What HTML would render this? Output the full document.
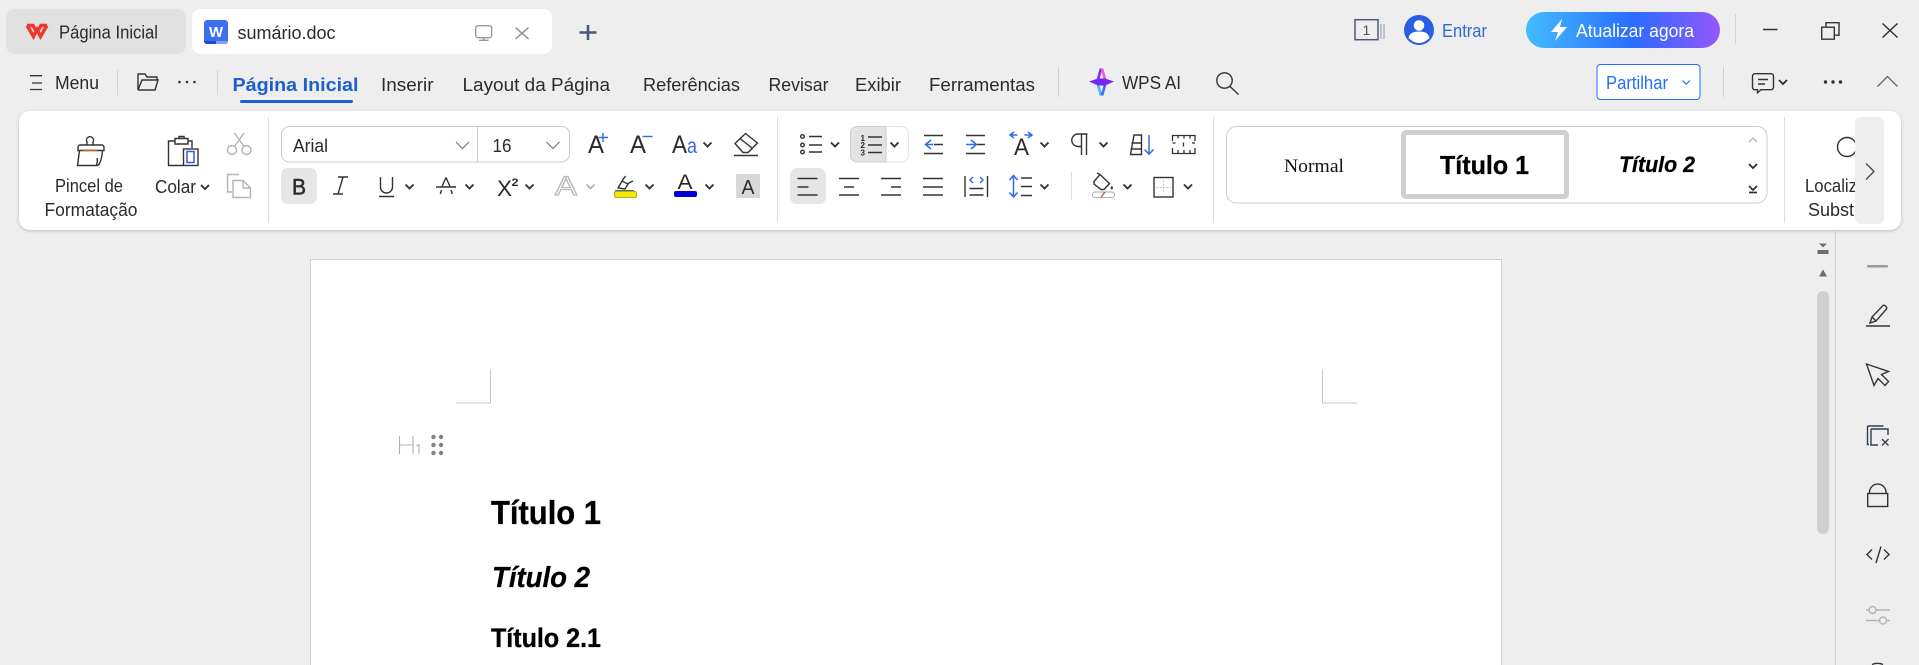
<!DOCTYPE html>
<html lang="pt"><head><meta charset="utf-8"><title>sumário.doc</title>
<style>
html,body{margin:0;padding:0;width:1919px;height:665px;overflow:hidden;background:#eeeeee}
svg{display:block;position:absolute;left:0;top:0}
text{font-family:"Liberation Sans",sans-serif;fill:#2b2b2b}
.i{fill:none;stroke:#333;stroke-width:1.4}
.g{fill:none;stroke:#b4b4b4;stroke-width:1.4}
.b{fill:none;stroke:#2f6bea;stroke-width:1.5}
</style></head><body>
<svg width="1919" height="665" viewBox="0 0 1919 665" xmlns="http://www.w3.org/2000/svg">
<defs>
<path id="c" d="M0 0l4 4 4-4" fill="none" stroke="#333" stroke-width="1.9"/>
<path id="t" d="M0 0l6.500 6.500 6.500-6.500" fill="none" stroke="#777" stroke-width="1.200"/>
<linearGradient id="bt" x1="0" x2="1" y1="0" y2="0"><stop offset="0" stop-color="#43bcff"/><stop offset=".55" stop-color="#2a6cff"/><stop offset="1" stop-color="#9557fb"/></linearGradient>
<filter id="sh" x="-2%" y="-10%" width="104%" height="125%"><feDropShadow dx="0" dy="1" stdDeviation="1.600" flood-color="#000" flood-opacity=".22"/></filter>
</defs>

<!-- tabs -->
<rect x="6" y="9" width="180" height="45" rx="9" fill="#e1e1e1"/>
<rect x="192" y="9" width="360" height="45" rx="9" fill="#fff"/>
<path d="M27 25.500L33.500 36.500L37 29.500L40.500 36.500L47 25.500M27 25.500h6L37 33M47 25.500h-6L37 33" fill="none" stroke="#f0352b" stroke-width="3.400" stroke-linejoin="miter"/>
<text x="59" y="38.500" font-size="18" textLength="99" lengthAdjust="spacingAndGlyphs">Página Inicial</text>
<rect x="204" y="20" width="24" height="24" rx="3" fill="#3f6ff0"/>
<path d="M204 41h12v3h-9a3 3 0 0 1-3-3z" fill="#1c4ccf"/><path d="M216 41h12a3 3 0 0 1-3 3h-9z" fill="#7d9ff5"/>
<text x="209" y="37" font-size="15" font-weight="700" style="fill:#fff" textLength="14" lengthAdjust="spacingAndGlyphs">W</text>
<text x="237.500" y="39" font-size="18" textLength="98" lengthAdjust="spacingAndGlyphs">sumário.doc</text>
<g fill="none" stroke="#9a9a9a" stroke-width="1.400"><rect x="475.700" y="25.700" width="16" height="12" rx="2.500"/><path d="M483.700 37.700v2.500M479 40.300h9.500"/></g>
<path d="M515.500 27.500l13 11.500M528.500 27.500l-13 11.500" fill="none" stroke="#8c8c8c" stroke-width="1.400"/>
<path d="M588 25v15M579.500 32.500h17" fill="none" stroke="#4a5878" stroke-width="2.600"/>

<!-- top right -->
<rect x="1355" y="19.700" width="23" height="20" fill="none" stroke="#4f5b75" stroke-width="1.500"/>
<text x="1362.500" y="35" font-size="14" style="fill:#555">1</text>
<path d="M1381 24v15M1384 24v15" stroke="#9aa1b0" stroke-width="1.200"/>
<circle cx="1419" cy="30" r="15" fill="#2a5de3"/>
<circle cx="1419" cy="25.500" r="5.300" fill="#fff"/><path d="M1408.500 38c1-5 5-6.500 10.500-6.500s9.500 1.500 10.500 6.500c-3 3-6.500 5-10.500 5s-7.500-2-10.500-5z" fill="#fff"/>
<text x="1442" y="37" font-size="18" style="fill:#3168d8" textLength="45" lengthAdjust="spacingAndGlyphs">Entrar</text>
<rect x="1526" y="12" width="194" height="36" rx="18" fill="url(#bt)"/>
<path d="M1562 19l-11 13h7l-3 9 12-14h-7z" fill="#fff"/>
<text x="1576" y="37" font-size="18" style="fill:#fff" textLength="118" lengthAdjust="spacingAndGlyphs">Atualizar agora</text>
<path d="M1735.500 14v30" stroke="#d2d2d2"/>
<path d="M1763 29.500h14.500" stroke="#333" stroke-width="1.500"/>
<path d="M1826 27v-4.300h13v12.500h-4M1821.700 27.200h12.600v12h-12.600z" fill="none" stroke="#333" stroke-width="1.400"/>
<path d="M1882.500 23.500l15 14M1897.500 23.500l-15 14" stroke="#333" stroke-width="1.500"/>

<!-- menu row -->
<path d="M30 75.700h12M32 83h10M30 89.500h12" stroke="#333" stroke-width="1.300"/>
<text x="55" y="89" font-size="18" textLength="44" lengthAdjust="spacingAndGlyphs">Menu</text>
<path d="M117.500 70v25M217.500 70v25" stroke="#d4d4d4"/>
<path d="M138 90V74h7l2 3h10v3M138 90h17l3-10h-16l-4 10" class="i"/>
<g fill="#333"><circle cx="179.500" cy="82" r="1.300"/><circle cx="187" cy="82" r="1.300"/><circle cx="194.500" cy="82" r="1.300"/></g>
<text x="232.500" y="91" font-size="18.500" font-weight="700" style="fill:#1d5fcf" textLength="126" lengthAdjust="spacingAndGlyphs">Página Inicial</text>
<rect x="240" y="100" width="113" height="3" rx="1.500" fill="#1d5fcf"/>
<text x="381" y="91" font-size="18" textLength="52.500" lengthAdjust="spacingAndGlyphs">Inserir</text>
<text x="462.500" y="91" font-size="18" textLength="147.500" lengthAdjust="spacingAndGlyphs">Layout da Página</text>
<text x="643" y="91" font-size="18" textLength="97" lengthAdjust="spacingAndGlyphs">Referências</text>
<text x="768.500" y="91" font-size="18" textLength="60" lengthAdjust="spacingAndGlyphs">Revisar</text>
<text x="855" y="91" font-size="18" textLength="46" lengthAdjust="spacingAndGlyphs">Exibir</text>
<text x="929" y="91" font-size="18" textLength="106" lengthAdjust="spacingAndGlyphs">Ferramentas</text>
<path d="M1058.500 67v30" stroke="#cfcfcf"/>
<path d="M1098 79.500L1101 68.500" stroke="#7a2cff" stroke-width="2.600" fill="none"/>
<path d="M1102 68.500L1105 79.500" stroke="#e55bd8" stroke-width="2.600" fill="none"/>
<path d="M1098 85L1101 95.500" stroke="#47b6ff" stroke-width="2.600" fill="none"/>
<path d="M1102 95.500L1105 85" stroke="#3a6cff" stroke-width="2.600" fill="none"/>
<path d="M1089 81.500L1098 78.500H1105L1114 81.500L1105 85.500H1098Z" fill="#7424f4"/>
<text x="1122" y="89" font-size="18" textLength="59" lengthAdjust="spacingAndGlyphs">WPS AI</text>
<circle cx="1224.500" cy="80.500" r="7.700" class="i"/><path d="M1230 86.500l8.500 8" class="i"/>
<rect x="1597" y="64.500" width="103" height="35" rx="3.500" fill="#fff" stroke="#1f6fff"/>
<text x="1606" y="89" font-size="18" style="fill:#1f6fff" textLength="62" lengthAdjust="spacingAndGlyphs">Partilhar</text>
<path d="M1682.500 80.500l3.700 3.700 3.700-3.700" fill="none" stroke="#1f6fff" stroke-width="1.200"/>
<path d="M1723.500 67v30" stroke="#cfcfcf"/>
<path d="M1755 73.700h16a2.500 2.500 0 0 1 2.500 2.500v11a2.500 2.500 0 0 1-2.500 2.500h-10l-3.500 3v-3h-2.500a2.500 2.500 0 0 1-2.500-2.500v-11a2.500 2.500 0 0 1 2.500-2.500zM1758 79.500h10M1758 84h7" class="i"/>
<use href="#c" x="1779" y="80"/>
<g fill="#333"><circle cx="1825.500" cy="82" r="1.700"/><circle cx="1833" cy="82" r="1.700"/><circle cx="1840.500" cy="82" r="1.700"/></g>
<path d="M1877.500 86.500l10-10 10 10" fill="none" stroke="#666" stroke-width="1.300"/>

<!-- ribbon -->
<rect x="19" y="111" width="1882" height="119" rx="11" fill="#fff" filter="url(#sh)"/>
<path d="M268.500 117v106M777.500 117v106M1213.500 117v106M1784.500 117v106" stroke="#dcdcdc"/>

<!-- clipboard -->
<path d="M87 145v-3a3.500 3.500 0 1 1 6 0v3M80 145h22c1 0 2 1 2 2.500v3H78v-3c0-1.500 1-2.500 2-2.500zM79.500 150.500L77.500 165.500h19.500c3 0 5-8 5.500-15M96.500 165c1-3 1-5 .5-7" class="i"/>
<path d="M83 150.300h14" stroke="#d2561e" stroke-width="1.500"/>
<text x="55" y="192" font-size="18" textLength="68" lengthAdjust="spacingAndGlyphs">Pincel de</text>
<text x="44.500" y="216" font-size="18" textLength="93" lengthAdjust="spacingAndGlyphs">Formatação</text>
<path d="M175 141h-6.500v24.500h14.500M188 141h4v7M175 138.500h13v5.500h-13zM179 138.500v-2h5v2" class="i"/>
<rect x="183.500" y="149" width="14.500" height="16.500" class="i"/>
<rect x="187" y="151.500" width="7" height="11" fill="none" stroke="#2f5fe0" stroke-width="1.500"/>
<text x="155" y="193" font-size="18" textLength="41" lengthAdjust="spacingAndGlyphs">Colar</text>
<use href="#c" x="201" y="185"/>
<g class="g"><circle cx="232" cy="150" r="4.500"/><circle cx="246.500" cy="150" r="4.500"/><path d="M234.500 146.500l9.500-13.500M244 146.500l-9.500-13.500"/>
<path d="M232 192h-4.500v-17.500h11.500M233 180.500h10l7.500 7.500v9.500H233zM243 180.500v7.500h7.500"/></g>

<!-- font -->
<rect x="281.500" y="126.500" width="288" height="35.500" rx="8" fill="#fff" stroke="#ccc"/>
<path d="M477.500 126.500v35.500" stroke="#ccc"/>
<text x="293" y="152" font-size="18" textLength="35" lengthAdjust="spacingAndGlyphs">Arial</text>
<use href="#t" x="456" y="142"/>
<text x="492.500" y="152" font-size="18" textLength="19" lengthAdjust="spacingAndGlyphs">16</text>
<use href="#t" x="546.500" y="142"/>
<text x="588" y="153" font-size="25" textLength="16" lengthAdjust="spacingAndGlyphs">A</text>
<path d="M603 133v9M598.500 137.500h9.500" stroke="#2f6bea" stroke-width="1.400"/>
<text x="630" y="153" font-size="25" textLength="16" lengthAdjust="spacingAndGlyphs">A</text>
<path d="M642.500 136.500h10" stroke="#2f6bea" stroke-width="1.400"/>
<text x="672" y="153" font-size="25" textLength="15" lengthAdjust="spacingAndGlyphs">A</text>
<text x="687" y="153" font-size="21" style="fill:#2f6bea" textLength="10" lengthAdjust="spacingAndGlyphs">a</text>
<use href="#c" x="703.500" y="142.500"/>
<path d="M735 143.500l10.500-10 12 9.500-9.500 9.500h-5zM740 138.500l12 9.500M734 155.500h24" class="i"/>
<rect x="281" y="168" width="36" height="36" rx="7" fill="#e6e6e6"/>
<text x="292" y="194.500" font-size="22" style="stroke:#333;stroke-width:.6" textLength="14" lengthAdjust="spacingAndGlyphs">B</text>
<path d="M338 177h10M333 194h10M343 177l-5 17" class="i"/>
<path d="M380.500 177v10a6 6 0 0 0 12 0v-10M379 196.500h15" class="i"/>
<use href="#c" x="405.500" y="184.500"/>
<path d="M436 187h20M446 177.500l-4 9M446 177.500l4 9M441.500 190l-1.200 4M451 190l1.200 4" class="i"/>
<use href="#c" x="465.500" y="184.500"/>
<text x="497" y="196" font-size="22" textLength="15" lengthAdjust="spacingAndGlyphs">X</text>
<text x="511.500" y="186" font-size="11" font-weight="700" textLength="7" lengthAdjust="spacingAndGlyphs">2</text>
<use href="#c" x="525.500" y="184.500"/>
<text x="555" y="195" font-size="27" style="fill:#fff;stroke:#b9b9b9;stroke-width:1.200" textLength="22" lengthAdjust="spacingAndGlyphs">A</text>
<path d="M586.500 184.500l4 4 4-4" fill="none" stroke="#b4b4b4" stroke-width="1.800"/>
<path d="M618 188l4-7 6 3-3 5zM622 181l3.500-5M627 184l6-3M615 191h19" class="i"/>
<rect x="614.500" y="191.500" width="22" height="6" rx="1.500" fill="#f6ea00" stroke="#b9ac20"/>
<use href="#c" x="645.500" y="184.500"/>
<text x="677.500" y="189" font-size="21" textLength="15" lengthAdjust="spacingAndGlyphs">A</text>
<rect x="674" y="191" width="23" height="6" rx="2" fill="#0000d6"/>
<use href="#c" x="705.500" y="184.500"/>
<rect x="736" y="174" width="24" height="24" rx="1" fill="#d8d8d8"/>
<text x="741.500" y="194" font-size="20" textLength="13" lengthAdjust="spacingAndGlyphs">A</text>

<!-- paragraph row 1 -->
<g class="i"><circle cx="802.500" cy="136.500" r="1.800"/><circle cx="802.500" cy="145" r="1.800"/><circle cx="802.500" cy="152" r="1.800"/></g>
<path d="M809 136.500h13M809 145h13M809 152h13" class="i"/>
<use href="#c" x="831" y="142.500"/>
<rect x="850.500" y="126.500" width="58" height="35.500" rx="7" fill="#fff" stroke="#e2e2e2"/>
<path d="M857 126.500h29v35.500h-29a6.500 6.500 0 0 1-6.500-6.500v-22.500a6.500 6.500 0 0 1 6.500-6.500z" fill="#e3e3e3" stroke="#ccc"/>
<text x="860.500" y="141" font-size="8" font-weight="700">1</text><text x="860.500" y="148" font-size="8" font-weight="700">2</text><text x="860.500" y="155.500" font-size="8" font-weight="700">3</text>
<path d="M868 137h14M868 145h14M868 152.500h14" class="i"/>
<use href="#c" x="890.500" y="142.500"/>
<path d="M924 135.500h19M934 144.500h9M924 153.500h19" class="i"/>
<path d="M931 140l-5.500 4.500 5.500 4.500M926 144.500h7" class="b"/>
<path d="M966 135.500h19M977 144.500h8M966 153.500h19" class="i"/>
<path d="M971 140l5.500 4.500-5.500 4.500M966 144.500h10" class="b"/>
<text x="1014" y="155" font-size="24" textLength="15" lengthAdjust="spacingAndGlyphs">A</text>
<path d="M1014 138l-4 -3 4-3M1010.500 135h7M1028 138l4-3-4-3M1024.500 135h7" class="b"/>
<use href="#c" x="1040.500" y="142.500"/>
<path d="M1086.500 134v21M1081.500 134v21M1087.500 134h-9.500a6 6 0 0 0 0 12.500h3.500" class="i"/>
<use href="#c" x="1099.500" y="142.500"/>
<path d="M1134 135h7.500v19.500h-11zM1131.500 143h10M1130.500 149h11" class="i"/>
<path d="M1149 135v19M1144.500 149.500l4.500 4.700 4.500-4.700" class="b"/>
<path d="M1172.500 141v-5.500h22.500v5.500M1172.500 148v5.500h22.500v-5.500M1178 135.500v3M1184 135.500v3M1190 135.500v3M1178 150v3M1184 150v3M1190 150v3M1172.500 143h3M1192 143h3M1183.500 142.500v4" fill="none" stroke="#333" stroke-width="1.300"/>

<!-- paragraph row 2 -->
<rect x="790" y="168" width="36" height="36" rx="7" fill="#e6e6e6"/>
<path d="M797.500 178.500h20M797.500 187h11M797.500 195h20" class="i"/>
<path d="M839 178.500h20M844 187h10M839 195h20" class="i"/>
<path d="M881 178.500h20M891 187h10M881 195h20" class="i"/>
<path d="M923 178.500h20M923 187h20M923 195h20" class="i"/>
<path d="M965 176v21M987.500 176v21M969.500 188.500h14M969.500 195h14" class="i"/>
<path d="M973 177l-3 3 3 3M980 177l3 3-3 3" class="b"/>
<path d="M1013.500 176v21M1009.500 180l4-4.500 4 4.500M1009.500 192.500l4 4.500 4-4.500" class="b"/>
<path d="M1021 178h11M1021 186.500h11M1021 195.500h11" class="i"/>
<use href="#c" x="1040.500" y="184.500"/>
<path d="M1071.500 172v28" stroke="#dcdcdc"/>
<path d="M1094 181.500l6-7 9.500 9-5.500 6h-3l-7-5.500zM1100 174.500l-3-1.500" class="i"/>
<path d="M1112 185.500c-1.500 2-2 3-.5 4 2 0 1.500-2 .5-4z" fill="#333"/>
<rect x="1092.500" y="192" width="22" height="5.500" rx="2.500" fill="#fff" stroke="#aaa"/>
<path d="M1101 197l4-5" stroke="#e03a2e" stroke-width="1.200"/>
<use href="#c" x="1123.500" y="184.500"/>
<rect x="1154" y="177.500" width="19" height="19.500" class="i"/>
<path d="M1163.500 180v14M1156 187.500h15" stroke="#c8c8c8" stroke-dasharray="2 1.500"/>
<use href="#c" x="1184" y="184.500"/>

<!-- styles -->
<rect x="1226.500" y="126.500" width="540.500" height="76.500" rx="10" fill="#fff" stroke="#ccc"/>
<text x="1284" y="172" font-size="18.500" style='font-family:"Liberation Serif",serif;fill:#111' textLength="60" lengthAdjust="spacingAndGlyphs">Normal</text>
<rect x="1403.500" y="132.500" width="163" height="64" rx="2.500" fill="#fff" stroke="#cfcfcf" stroke-width="5"/>
<text x="1440" y="174" font-size="26" font-weight="700" style="fill:#000;stroke:#000;stroke-width:.3" textLength="89" lengthAdjust="spacingAndGlyphs">Título 1</text>
<text x="1619" y="172" font-size="22.500" font-weight="700" font-style="italic" style="fill:#000;stroke:#000;stroke-width:.3" textLength="76" lengthAdjust="spacingAndGlyphs">Título 2</text>
<path d="M1749 142l4-4 4 4" fill="none" stroke="#c4c4c4" stroke-width="1.800"/>
<use href="#c" x="1749" y="164"/>
<path d="M1749 186l4 4 4-4M1749 192.500h8" fill="none" stroke="#333" stroke-width="1.700"/>
<circle cx="1847" cy="147" r="9.500" class="i"/>
<text x="1805" y="192" font-size="18" textLength="52" lengthAdjust="spacingAndGlyphs">Localiz</text>
<text x="1808" y="216" font-size="18" textLength="46" lengthAdjust="spacingAndGlyphs">Subst</text>
<rect x="1855" y="117" width="29" height="107" rx="6" fill="#eeeeee"/>
<path d="M1866 163.500l8 8-8 8" fill="none" stroke="#444" stroke-width="1.300"/>

<!-- document page -->
<rect x="310.500" y="259.500" width="1191" height="420" fill="#fff" stroke="#cfcfcf"/>
<path d="M490.500 369v34H456M1322.500 369v34H1357" fill="none" stroke="#c6c6c6"/>
<path d="M399.500 436v18M413 436v18M399.500 445h13.500M416.500 446l2.500-1.500v9.500" fill="none" stroke="#b0b0b0" stroke-width="1.100"/>
<g fill="#808080"><circle cx="433.500" cy="437" r="2.200"/><circle cx="441" cy="437" r="2.200"/><circle cx="433.500" cy="445" r="2.200"/><circle cx="441" cy="445" r="2.200"/><circle cx="433.500" cy="453" r="2.200"/><circle cx="441" cy="453" r="2.200"/></g>
<text x="491" y="524" font-size="33" font-weight="700" style="fill:#000;stroke:#000;stroke-width:.3" textLength="110" lengthAdjust="spacingAndGlyphs">Título 1</text>
<text x="492" y="587" font-size="29" font-weight="700" font-style="italic" style="fill:#000;stroke:#000;stroke-width:.3" textLength="98" lengthAdjust="spacingAndGlyphs">Título 2</text>
<text x="491" y="647" font-size="26.500" font-weight="700" style="fill:#000;stroke:#000;stroke-width:.3" textLength="110" lengthAdjust="spacingAndGlyphs">Título 2.1</text>

<!-- scrollbar -->
<path d="M1819 243.500h8l-4 4zM1817.500 250h11v4h-11z" fill="#6d6d6d"/>
<path d="M1823 269.500l4 7h-8z" fill="#6d6d6d"/>
<rect x="1817" y="291" width="12" height="243" rx="6" fill="#d0d0d0"/>

<!-- right panel -->
<path d="M1835.500 230v435" stroke="#cfcfcf"/>
<rect x="1867" y="265" width="21" height="2.500" rx="1" fill="#9a9a9a"/>
<path d="M1866 326h24M1870 323l2-6 11-11.500c1.500-1 4.500 1.500 3.500 3.500L1876 321l-6 2zM1872 317l4 4" class="i"/>
<path d="M1866.500 364l22 7.500-7 3 7 7-3.500 4-7-7-4 7z" class="i"/>
<path d="M1869 444.500h-1.500v-18.500M1867.500 426h16M1871 429h17v6M1871 429v16h7" fill="none" stroke="#333e52" stroke-width="1.400"/>
<path d="M1882 439l6.500 6.500M1888.500 439l-6.500 6.500" stroke="#333e52" stroke-width="1.300"/>
<rect x="1867.700" y="493.500" width="20" height="13" class="i"/>
<path d="M1869.500 493.500v-2a8.300 8.300 0 0 1 16.500 0v2" class="i"/>
<path d="M1872 549.500l-5 5 5 5M1884 549.500l5 5-5 5M1881 546.500l-5 16.500" class="i"/>
<g class="g"><circle cx="1872.500" cy="610" r="3.500"/><circle cx="1883" cy="620.500" r="3.500"/><path d="M1866 610h3M1876 610h14M1866 620.500h13.500M1886.500 620.500h3.500"/></g>
<path d="M1872 664.500a14 14 0 0 1 11 0" fill="none" stroke="#333" stroke-width="1.400"/>
</svg>
</body></html>
